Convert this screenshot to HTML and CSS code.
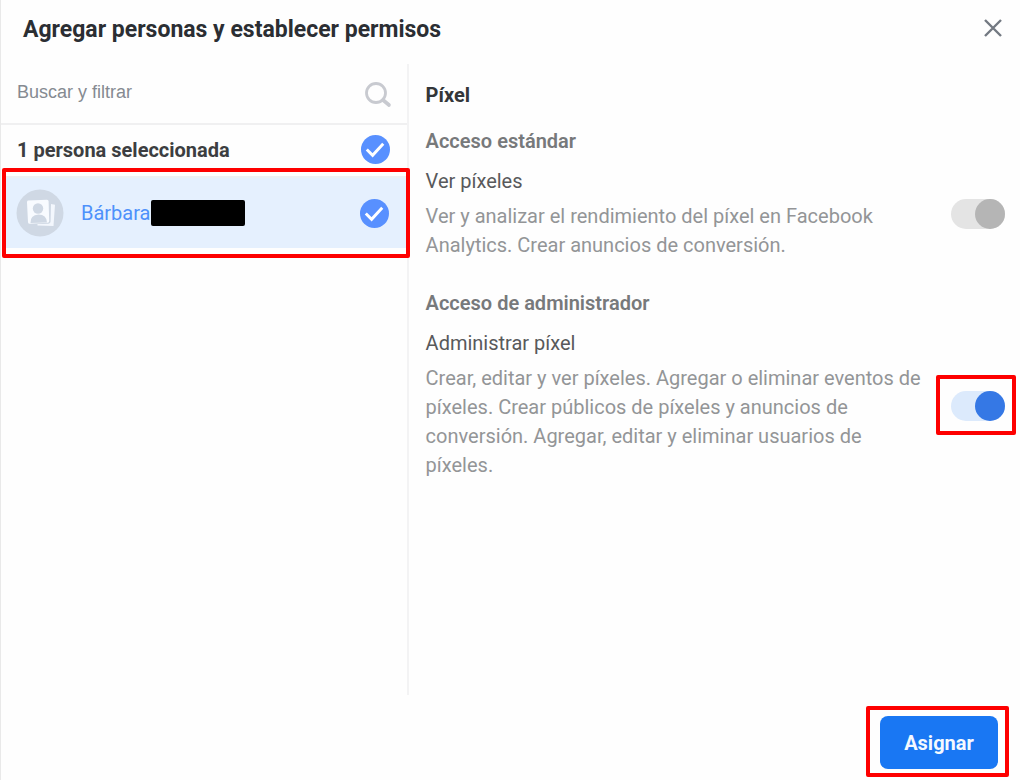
FILE: index.html
```html
<!DOCTYPE html>
<html lang="es">
<head>
    <meta charset="UTF-8">
    <meta name="viewport" content="width=device-width, initial-scale=1.0">
    <title>Agregar personas y establecer permisos</title>
    <link rel="stylesheet" href="styles.css">
</head>
<body>
    <div class="dialog" role="dialog" aria-labelledby="dialogTitle">
        <header class="dialog-header">
            <h1 id="dialogTitle">Agregar personas y establecer permisos</h1>
            <button type="button" class="close" aria-label="Cerrar">
                <svg width="20" height="20" viewBox="0 0 20 20" fill="none" stroke="#737982" stroke-width="2.400">
                    <path d="M2 2l16 16M18 2L2 18"/>
                </svg>
            </button>
        </header>

        <div class="dialog-body">
            <section class="people">
                <div class="search">
                    <input type="text" id="search" placeholder="Buscar y filtrar" aria-label="Buscar y filtrar">
                    <svg width="28" height="28" viewBox="0 0 28 28" fill="none" stroke="#c8cad0">
                        <circle cx="12" cy="12" r="9.500" stroke-width="2.800"/>
                        <path d="M19 19l6 5" stroke-width="3.600" stroke-linecap="round"/>
                    </svg>
                </div>
                <div class="selected-count">
                    <label for="selectAll">1 persona seleccionada</label>
                    <input type="checkbox" class="check" id="selectAll" checked>
                </div>
                <div class="person-frame">
                    <div class="person">
                        <svg class="avatar" width="48" height="48" viewBox="0 0 48 48">
                            <circle cx="24" cy="24" r="23.5" fill="#cfd8e4"/>
                            <path d="M35 15l4 .7-1.500 21.300-16-.5v-1.500l11-.2q2-.2 2.100-2.300z" fill="#f3f7fd"/>
                            <path d="M12 11.500l19-.8q1.500 0 1.600 1.500l.6 19.800q0 1.500-1.500 1.700l-18 1q-1.500 0-1.700-1.500l-1-20q0-1.500 1-1.700z" fill="#f8fbff"/>
                            <circle cx="22" cy="19.500" r="5.200" fill="#cfd8e4"/>
                            <path d="M14.500 34q-.5-8 8-8.500 8 0 8.500 8z" fill="#cfd8e4"/>
                        </svg>
                        <label for="person1">Bárbara<span class="redacted"></span></label>
                        <input type="checkbox" class="check" id="person1" checked>
                    </div>
                </div>
            </section>

            <section class="permissions">
                <h2>Píxel</h2>

                <h3>Acceso estándar</h3>
                <div class="permission">
                    <div class="permission-text">
                        <label for="viewPixels">Ver píxeles</label>
                        <p>Ver y analizar el rendimiento del píxel en Facebook Analytics. Crear anuncios de conversión.</p>
                    </div>
                    <div class="switch-wrap">
                        <input type="checkbox" role="switch" class="switch" id="viewPixels" checked disabled>
                    </div>
                </div>

                <h3>Acceso de administrador</h3>
                <div class="permission">
                    <div class="permission-text">
                        <label for="managePixel">Administrar píxel</label>
                        <p>Crear, editar y ver píxeles. Agregar o eliminar eventos de píxeles. Crear públicos de píxeles y anuncios de conversión. Agregar, editar y eliminar usuarios de píxeles.</p>
                    </div>
                    <div class="switch-wrap marked">
                        <input type="checkbox" role="switch" class="switch" id="managePixel" checked>
                    </div>
                </div>
            </section>
        </div>

        <footer class="dialog-footer">
            <div class="assign-frame">
                <button type="button" class="btn-primary">Asignar</button>
            </div>
        </footer>
    </div>
</body>
</html>
```
FILE: styles.css
```css
* { margin: 0; padding: 0; box-sizing: border-box; }
body {
    font-family: Roboto, "Liberation Sans", sans-serif;
    font-size: 20px; line-height: 28px; color: #333639; background: #fefefe;
}
.dialog { min-height: 100vh; display: flex; flex-direction: column; border-left: 1px solid #e9e9e9; }

.dialog-header {
    display: flex; align-items: center; justify-content: space-between;
    height: 64px; padding: 0 17px 4px 22px;
}
h1 { font-size: 23px; font-weight: 700; color: #2b2e33; }
.close { display: flex; padding: 0; border: none; background: none; cursor: pointer; margin-bottom: 4px; }

.dialog-body { flex: 1; display: grid; grid-template-columns: 2fr 3fr; }

.people { border-right: 2px solid #f3f3f4; }
.search {
    display: flex; align-items: center; gap: 8px;
    height: 61px; padding: 2px 15px 0 16px; border-bottom: 2px solid #f0f0f1;
}
.search input {
    flex: 1; min-width: 0; border: none; outline: none; background: none;
    font-family: "Liberation Sans", Arial, sans-serif; font-size: 18px; padding-bottom: 4px;
}
.search input::placeholder { color: #858a91; opacity: 1; }
.selected-count {
    display: flex; align-items: center; justify-content: space-between;
    height: 43px; padding: 6px 17px 0 16px; font-weight: 700; color: #3c3e41;
}
.check {
    appearance: none; flex: none; width: 29px; height: 29px; border-radius: 50%; cursor: pointer;
    border: 2px solid #c8cad0;
}
.check:checked {
    border: none;
    background: #5890ff url('data:image/svg+xml,<svg xmlns="http://www.w3.org/2000/svg" viewBox="0 0 30 30"><path d="M6 15l6 6L23 9" fill="none" stroke="white" stroke-width="3"/></svg>') center / 100%;
}

.person-frame {
    position: relative; margin: 0 -3px 0 1px; padding: 4px 0 6px;
    border: 4px solid #fe0000; border-radius: 2px;
}
.person {
    display: flex; align-items: center; height: 72px; padding: 0 17px 0 10px;
    background: #e5f0fe; border-top: 2px solid #ecf0f4;
}
.person label { flex: 1; display: flex; align-items: center; margin-left: 17px; color: #4e91fb; }
.redacted { width: 94px; height: 26px; border-radius: 2px; background: #000; }

.permissions { padding: 17px 15px 0 17px; }
h2 { font-size: 20px; font-weight: 700; margin-bottom: 18px; }
h3 { font-size: 20px; font-weight: 600; color: #77797b; margin-bottom: 12px; }
.permission {
    display: flex; align-items: center; justify-content: space-between;
    margin-bottom: 29px;
}
.permission-text { max-width: 506px; }
.permission-text label { display: block; color: #58595b; margin-bottom: 7px; }
.permission-text p { line-height: 29px; color: #939597; }

.switch-wrap { display: flex; flex: none; }
.switch-wrap.marked {
    padding: 12px 7px 10px 11px; margin-right: -11px; margin-left: -5px;
    border: 4px solid #fe0000; border-radius: 2px;
}
.switch {
    appearance: none; width: 54px; height: 30px; border-radius: 15px;
    background: #e4e4e4; display: flex; cursor: pointer;
}
.switch::before { content: ""; width: 30px; height: 30px; border-radius: 50%; background: #b5b5b5; }
.switch:checked { justify-content: flex-end; }
.switch:checked:enabled { background: #dceafc; }
.switch:checked:enabled::before { background: #3578e5; }

.dialog-footer { display: flex; justify-content: flex-end; padding: 11px 11px 3px; }
.assign-frame { display: flex; padding: 6px 7px 4px 10px; border: 4px solid #fe0000; border-radius: 2px; }
.btn-primary {
    width: 118px; height: 53px; border: none; border-radius: 8px; cursor: pointer;
    background: #1977f3; color: #f4f9ff; font-family: inherit; font-size: 20px; font-weight: 700;
}
```
